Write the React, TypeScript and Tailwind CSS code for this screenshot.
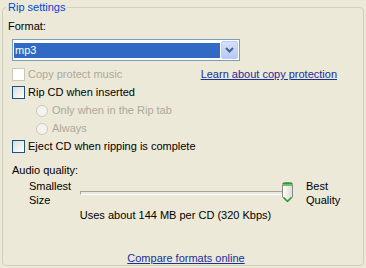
import clsx from "clsx";

const linkClass = "text-[#1a2e9c] underline underline-offset-[1px]";

function CheckBox({ disabled }: { disabled?: boolean }) {
  return (
    <span
      className={clsx(
        "block h-[13px] w-[13px] shrink-0 border",
        disabled
          ? "border-[#cac8bb] bg-white"
          : "border-[#1c5180] bg-linear-to-br from-[#dcdcd7] to-white"
      )}
    />
  );
}

function Radio() {
  return <span className="block h-[12px] w-[12px] shrink-0 rounded-full border border-[#cac8bb] bg-[#f4f3ee]" />;
}

function Thumb() {
  return (
    <svg width="11" height="21" viewBox="0 0 11 21" className="absolute left-[202px] top-[-9px]">
      <defs>
        <linearGradient id="thumbFill" x1="0" y1="0" x2="1" y2="0">
          <stop offset="0" stopColor="#ffffff" />
          <stop offset="1" stopColor="#dedcd3" />
        </linearGradient>
      </defs>
      <path d="M0.5 2.5 Q0.5 0.5 2.5 0.5 H8.5 Q10.5 0.5 10.5 2.5 V15 L5.5 20 L0.5 15 Z" fill="url(#thumbFill)" stroke="#8b8a82" />
      <rect x="1" y="1" width="9" height="1" fill="#21a121" />
      <rect x="1" y="2" width="9" height="2" fill="#5fcb5f" />
      <path d="M1.5 15.3 L5.5 19.2 L9.5 15.3" fill="none" stroke="#21a121" strokeWidth="1.4" />
    </svg>
  );
}

export default function App() {
  return (
    <div className="h-[268px] w-[366px] bg-[#ece9d8] px-[2px] pt-[1px] font-['Liberation_Sans',Arial,sans-serif] text-[11px] leading-[13px] text-black">
      <fieldset className="h-[265px] rounded-[4px] border border-[#d0d0bf]">
        <legend className="ml-[3px] px-[2px] text-[#0046d5]">Rip settings</legend>
        <div className="pl-[9px]">
          <div className="mt-[6px] -ml-[4px]">Format:</div>

          {/* format combo */}
          <div className="mt-[6px] flex h-[22px] w-[228px] items-center border border-[#7f9db9] bg-white px-[1px]">
            <div className="flex h-[15px] flex-1 items-center bg-[#316ac5] pl-[1px] text-white">mp3</div>
            <div className="ml-[1px] flex h-[18px] w-[17px] items-center justify-center rounded-[2px] border border-[#b9cdf8] bg-linear-to-b from-[#d4e0fc] to-[#b6c9f5]">
              <svg width="9" height="6" viewBox="0 0 9 6">
                <path d="M1 1 L4.5 4.5 L8 1" fill="none" stroke="#4d6185" strokeWidth="2" />
              </svg>
            </div>
          </div>

          <div className="mt-[7px] flex h-[13px] items-center">
            <CheckBox disabled />
            <span className="ml-[3px] text-[#aca899]">Copy protect music</span>
            <a href="#" className={clsx("ml-auto mr-[26px]", linkClass)}>Learn about copy protection</a>
          </div>

          <div className="mt-[5px] flex h-[13px] items-center gap-[3px]">
            <CheckBox />
            <span>Rip CD when inserted</span>
          </div>

          <div className="ml-[24px] mt-[5px] flex h-[13px] items-center gap-[4px] text-[#aca899]">
            <Radio />
            <span>Only when in the Rip tab</span>
          </div>
          <div className="ml-[24px] mt-[5px] flex h-[13px] items-center gap-[4px] text-[#aca899]">
            <Radio />
            <span>Always</span>
          </div>

          <div className="mt-[5px] flex h-[13px] items-center gap-[3px]">
            <CheckBox />
            <span>Eject CD when ripping is complete</span>
          </div>

          <div className="mt-[11px]">Audio quality:</div>

          {/* quality slider */}
          <div className="mt-[2px] flex h-[28px] items-center leading-[14px]">
            <div className="ml-[17px] w-[51px]">
              <div>Smallest</div>
              <div>Size</div>
            </div>
            <div className="relative h-[4px] w-[213px]">
              <div className="h-[4px] w-[207px] border-l border-t border-b border-[#a4a29a] border-b-white bg-[#e9e8e1]" />
              <Thumb />
            </div>
            <div className="ml-[13px]">
              <div>Best</div>
              <div>Quality</div>
            </div>
          </div>

          <div className="ml-[64px] mt-[2px] w-[199px] text-center">Uses about 144 MB per CD (320 Kbps)</div>

          <div className="ml-[94px] mt-[30px] w-[160px] text-center">
            <a href="#" className={linkClass}>Compare formats online</a>
          </div>
        </div>
      </fieldset>
    </div>
  );
}
